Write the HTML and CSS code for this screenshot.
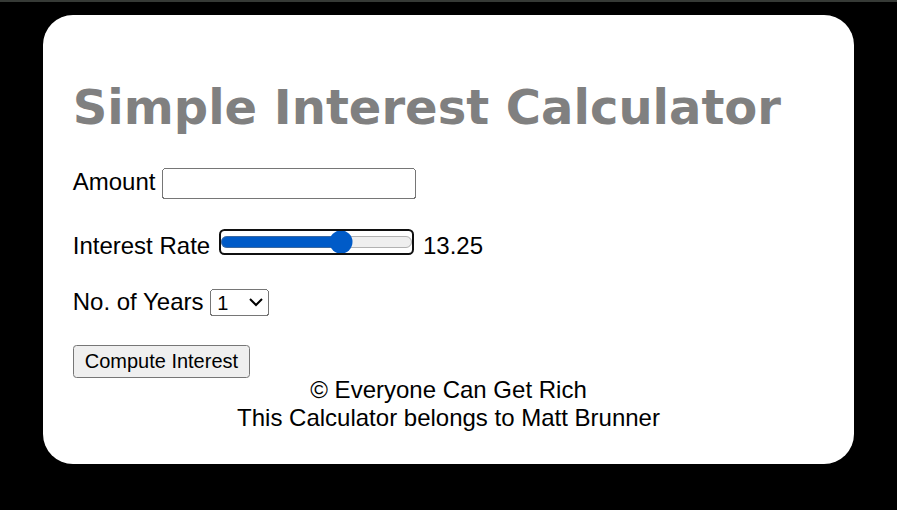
FILE: index.html
```html
<!DOCTYPE html>
<html lang="en">
<head>
<meta charset="utf-8">
<title>Simple Interest Calculator</title>
<link rel="stylesheet" href="styles.css">
</head>
<body>
<main class="card">
  <h1 class="title">Simple Interest Calculator</h1>
  <div class="row row-amount">Amount <input type="number" class="amount"></div>
  <div class="row row-rate">Interest Rate <input type="range" class="rate" min="1" max="20" step="0.25" value="13.25"> <span class="rate-value">13.25</span></div>
  <div class="row row-years">No. of Years <select class="years">
    <option>1</option><option>2</option><option>3</option><option>4</option><option>5</option>
    <option>6</option><option>7</option><option>8</option><option>9</option>
  </select></div>
  <button class="compute">Compute Interest</button>
  <div class="footer">&copy; Everyone Can Get Rich<br>This Calculator belongs to Matt Brunner</div>
</main>
</body>
</html>
```
FILE: styles.css
```css
html {
  background: #000;
  border-top: 2px solid #363a36;
}
body {
  zoom: 1.5;
  margin: 0;
  background: #000;
  font-family: "Liberation Sans", Arial, sans-serif;
  font-size: 16px;
  color: #000;
}
.card {
  width: 541px;
  margin: 8.5px auto 0;
  box-sizing: border-box;
  background: #fff;
  border-radius: 20px;
  padding: 20px 20px 21px;
}
.title {
  font-family: Verdana, "DejaVu Sans", sans-serif;
  font-weight: bold;
  font-size: 32px;
  color: #808080;
  margin: 23px 0 21.5px;
}
.row {
  margin: 0;
}
.row-amount {
  margin-bottom: 18.5px;
}
.row-rate {
  margin-bottom: 18.5px;
}
.row-years {
  margin-bottom: 19.5px;
}
.amount {
  box-sizing: border-box;
  width: 169px;
  height: 21px;
  font-family: "Liberation Sans", Arial, sans-serif;
  font-size: 13.333px;
}
.rate {
  accent-color: #005bc8;
  outline: 1.5px solid #101010;
  outline-offset: -1px;
  border-radius: 3px;
}
.years {
  box-sizing: border-box;
  width: 39.5px;
  height: 17.5px;
  font-family: "Liberation Sans", Arial, sans-serif;
  font-size: 13.333px;
}
.compute {
  height: 22px;
  font-family: "Liberation Sans", Arial, sans-serif;
  font-size: 13.333px;
}
.footer {
  margin-top: -1px;
  text-align: center;
}
```
